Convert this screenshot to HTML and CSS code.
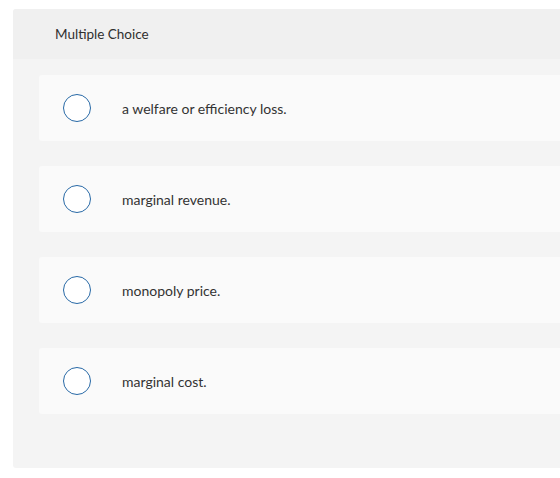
FILE: index.html
```html
<!DOCTYPE html>
<html>
<head>
<meta charset="utf-8">
<link rel="stylesheet" href="styles.css">
</head>
<body>
<div class="card">
  <div class="card-header">Multiple Choice</div>
  <div class="card-body">
    <div class="option"><span class="radio"></span><span class="label">a welfare or efficiency loss.</span></div>
    <div class="option"><span class="radio"></span><span class="label">marginal revenue.</span></div>
    <div class="option"><span class="radio"></span><span class="label">monopoly price.</span></div>
    <div class="option"><span class="radio"></span><span class="label">marginal cost.</span></div>
  </div>
</div>
</body>
</html>
```
FILE: styles.css
```css
html, body {
  margin: 0;
  padding: 0;
  background: #ffffff;
}
body {
  padding-top: 9px;
  font-family: Lato, "Open Sans", Arial, sans-serif;
  color: #333333;
}
.card {
  margin-left: 13px;
  background: #f4f4f4;
  border-radius: 3px 0 0 3px;
}
.card-header {
  height: 50px;
  box-sizing: border-box;
  padding-left: 42px;
  display: flex;
  align-items: center;
  background: #f0f0f0;
  border-radius: 3px 0 0 0;
  font-size: 13.5px;
  color: #2f2f2f;
}
.card-body {
  padding: 16px 0 54px 26px;
  display: flex;
  flex-direction: column;
  gap: 25px;
}
.option {
  height: 66px;
  display: flex;
  align-items: center;
  padding-left: 24px;
  background: #fafafa;
  border-radius: 3px 0 0 3px;
}
.radio {
  width: 28px;
  height: 28px;
  box-sizing: border-box;
  border: 1.5px solid #2869a6;
  border-radius: 50%;
  background: #ffffff;
  flex: none;
}
.label {
  margin-left: 31px;
  font-size: 14px;
  color: #333333;
}
```
